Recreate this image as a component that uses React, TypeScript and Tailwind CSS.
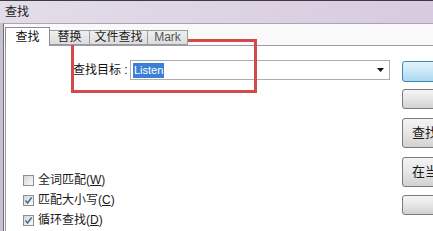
import React from "react";

function Check({ checked }: { checked: boolean }) {
  return (
    <div className="w-[11px] h-[11px] border border-[#8e8f8f] bg-gradient-to-br from-[#d6d6d6] to-[#fbfbfb] flex items-center justify-center shrink-0">
      {checked && (
        <svg width="9" height="9" viewBox="0 0 9 9">
          <path d="M1.5 4.5 L3.6 7 L7.6 1.6" fill="none" stroke="#4a6aa0" strokeWidth="1.6" />
        </svg>
      )}
    </div>
  );
}

function Row({ checked, label, key2 }: { checked: boolean; label: string; key2: string }) {
  return (
    <div className="h-[20px] flex items-center gap-[4px]">
      <Check checked={checked} />
      <span className="leading-[14px] whitespace-nowrap text-[#1a1a1a]">
        {label}(<span className="underline">{key2}</span>)
      </span>
    </div>
  );
}

function Btn({ h, mt, text, blue, left }: { h: string; mt: string; text?: string; blue?: boolean; left?: boolean }) {
  const base = "w-[140px] rounded-[3px] border flex items-center whitespace-nowrap text-[#1a1a1a] shrink-0 ";
  const color = blue
    ? "border-[#3c8ab8] bg-gradient-to-b from-[#e3f3fb] via-[#c9e7f6] to-[#a9d8f0] "
    : "border-[#7a7a7a] bg-gradient-to-b from-[#f4f4f4] via-[#e6e6e6] to-[#d2d2d2] ";
  return (
    <div className={base + color + h + " " + mt + " " + (left ? "justify-start pl-[9px] text-[13px]" : "justify-center")}>
      {text}
    </div>
  );
}

export default function App() {
  return (
    <div className="w-[433px] h-[231px] overflow-hidden relative bg-[#d5c9db] text-[12px] font-['Liberation_Sans','Noto_Sans_CJK_SC',sans-serif] text-[#111]">
      {/* title bar */}
      <div className="h-[23px] border-t border-[#3c3c3c] bg-gradient-to-r from-[#e3dde9] via-[#ddd4e4] to-[#d8cae0] flex items-center pl-[5px] leading-[14px] text-[#222]">
        查找
      </div>
      <div className="flex h-[208px]">
        <div className="w-[3px] bg-[#cbbfd2] shrink-0" />
        <div className="flex-1 flex flex-col border-l border-t border-l-[#6e6e6e] border-t-[#aea2b6] bg-[#f9f9f9] pt-[3px] min-w-0">
          {/* tabs */}
          <div className="flex items-end h-[18px] pl-[1px] relative z-10">
            <div className="w-[45px] h-[19px] -mb-[1px] bg-white border border-b-0 border-[#8c8e94] flex items-start justify-center pt-[2px] leading-[14px]">
              查找
            </div>
            <div className="w-[40px] h-[15px] bg-gradient-to-b from-[#f0f0f0] to-[#dcdcdc] border border-l-0 border-[#9a9ca2] flex items-center justify-center leading-[13px] text-[#222]">
              替换
            </div>
            <div className="w-[58px] h-[15px] bg-gradient-to-b from-[#f0f0f0] to-[#dcdcdc] border border-l-0 border-[#9a9ca2] flex items-center justify-center leading-[13px] text-[#222]">
              文件查找
            </div>
            <div className="w-[40px] h-[15px] bg-gradient-to-b from-[#f0f0f0] to-[#dcdcdc] border border-l-0 border-[#9a9ca2] flex items-center justify-center leading-[13px] text-[#555]">
              Mark
            </div>
          </div>
          {/* panel */}
          <div className="flex-1 ml-[1px] bg-white border-t border-l border-[#9a9ca2] flex min-w-0">
            <div className="w-[384px] shrink-0 flex flex-col">
              <div className="mt-[14px] flex items-center pl-[67px] h-[20px]">
                <span className="w-[57px] shrink-0 leading-[14px] whitespace-nowrap">查找目标 :</span>
                <div className="w-[260px] h-[20px] border border-[#abadb3] bg-white flex items-center pl-[2px] pr-[5px]">
                  <span className="bg-[#3b80d4] text-white text-[11px] leading-[15px] px-[1px]">Listen</span>
                  <div className="flex-1" />
                  <svg width="7" height="4" viewBox="0 0 7 4">
                    <path d="M0 0 L7 0 L3.5 4 Z" fill="#111" />
                  </svg>
                </div>
              </div>
              <div className="mt-[90px] pl-[17px] flex flex-col">
                <Row checked={false} label="全词匹配" key2="W" />
                <Row checked={true} label="匹配大小写" key2="C" />
                <Row checked={true} label="循环查找" key2="D" />
              </div>
            </div>
            <div className="ml-[12px] flex flex-col shrink-0">
              <Btn h="h-[21px]" mt="mt-[15px]" text="查找下一个" blue />
              <Btn h="h-[20px]" mt="mt-[7px]" text="计数" />
              <Btn h="h-[30px]" mt="mt-[9px]" text="查找所有打开文件" left />
              <Btn h="h-[30px]" mt="mt-[9px]" text="在当前文件中查找" left />
              <Btn h="h-[20px]" mt="mt-[8px]" text="关闭" />
            </div>
          </div>
        </div>
      </div>
      {/* red annotation rectangle */}
      <div className="absolute left-[71px] top-[39px] w-[186px] h-[54px] border-[3px] border-[#d24a4a] pointer-events-none" />
    </div>
  );
}
